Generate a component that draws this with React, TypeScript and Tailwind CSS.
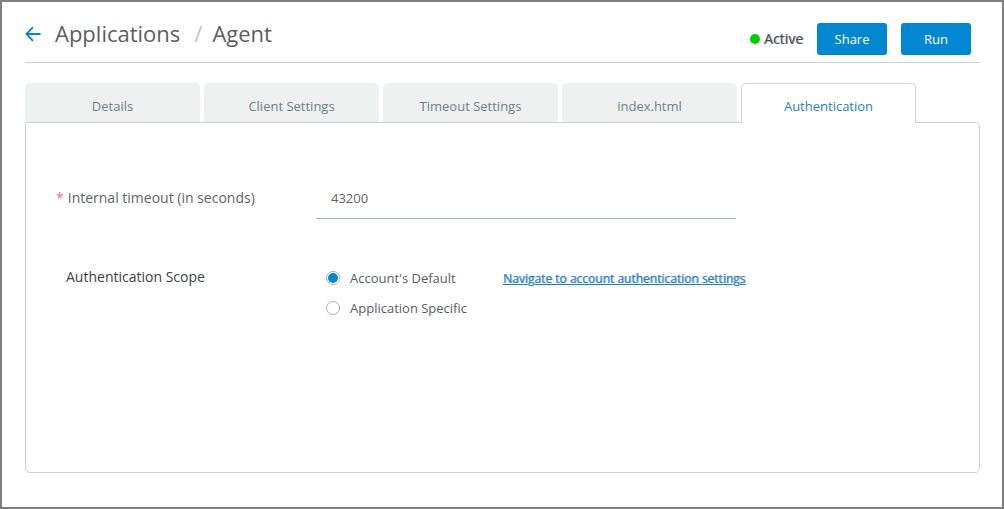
import { useState } from "react";

const tabs = [
  "Details",
  "Client Settings",
  "Timeout Settings",
  "index.html",
  "Authentication",
];

const scopes = ["Account's Default", "Application Specific"];

function Header() {
  return (
    <header className="flex h-[61px] items-center justify-between border-b border-[#cdd4d6]">
      <nav className="flex items-center pt-[2px] text-[22px] leading-8 text-[#5c5e62]">
        <a href="#back" aria-label="Back" className="mr-[14px] pt-px">
          <svg
            width="16"
            height="16"
            viewBox="0 0 16 16"
            fill="none"
            stroke="#0288d1"
            strokeWidth="1.8"
          >
            <path d="M15.5 8H1.5M8 1.2 1.4 8 8 14.8" />
          </svg>
        </a>
        <a href="#applications">Applications</a>
        <span className="mr-[10px] ml-[14px] text-[#c0c4ca]">/</span>
        <span>Agent</span>
      </nav>
      <div className="flex items-center pt-[14px] pr-[9px]">
        <span className="mr-1 h-[10px] w-[10px] rounded-full bg-[#00d000]" />
        <span className="mr-[14px] text-[14px] leading-5 text-[#454b55] [text-shadow:1px_0_0_#454b5580]">
          Active
        </span>
        <button className="mr-[14px] h-8 w-[70px] rounded-[3px] bg-[#0288d1] pt-[2px] text-[13px] text-white">
          Share
        </button>
        <button className="h-8 w-[70px] rounded-[3px] bg-[#0288d1] pt-[2px] text-[13px] text-white">
          Run
        </button>
      </div>
    </header>
  );
}

export default function App() {
  const [active, setActive] = useState("Authentication");
  const [scope, setScope] = useState(scopes[0]);
  const [timeout, setTimeoutValue] = useState("43200");

  return (
    <div className="flex min-h-screen flex-col border-2 border-[#7f7f7f] bg-white pr-[22px] pb-[34px] pl-[23px] font-['Open_Sans',sans-serif]">
      <Header />
      <div role="tablist" className="z-10 mt-5 -mb-px flex gap-1">
        {tabs.map((tab) => (
          <button
            key={tab}
            role="tab"
            aria-selected={active === tab}
            onClick={() => setActive(tab)}
            className={
              active === tab
                ? "h-10 w-[175px] rounded-t-[5px] border border-b-0 border-[#d3d6d9] bg-white pt-[6px] text-[13px] text-[#1f80c8]"
                : "h-10 w-[175px] rounded-t-[5px] border-b border-[#cdd4d6] bg-[#eff1f1] pt-2 text-[13px] text-[#6b808c]"
            }
          >
            {tab}
          </button>
        ))}
      </div>
      <main className="flex-1 rounded-[5px] rounded-tl-none border border-[#cdd2d5] pt-[54px] pl-[30px]">
        <div className="flex items-center">
          <label
            htmlFor="timeout"
            className="w-[260px] text-[14px] leading-5 text-[#5f6368]"
          >
            <span className="mr-1 text-[#f4716f]">*</span>
            Internal timeout (in seconds)
          </label>
          <input
            id="timeout"
            value={timeout}
            onChange={(e) => setTimeoutValue(e.target.value)}
            className="h-[42px] w-[420px] border-b border-[#a7b1b8] px-[15px] text-[13px] text-[#5f6368] outline-none"
          />
        </div>
        <fieldset className="mt-12 flex pl-[10px]">
          <legend className="float-left w-[260px] text-[14px] leading-5 text-[#3c3f45]">
            Authentication Scope
          </legend>
          <div className="flex flex-col gap-[10px] pt-px">
            {scopes.map((item) => (
              <label
                key={item}
                className="flex h-5 items-center gap-[10px] text-[13px] leading-5 text-[#5a5d62]"
              >
                <input
                  type="radio"
                  name="scope"
                  checked={scope === item}
                  onChange={() => setScope(item)}
                  className="h-[14px] w-[14px] appearance-none rounded-full border border-[#a9afb4] bg-white bg-clip-content p-px checked:bg-[#0288d1]"
                />
                {item}
              </label>
            ))}
          </div>
          <a
            href="#settings"
            className="ml-9 pt-[2px] text-[12px] leading-5 text-[#1f80c8] underline [text-shadow:1px_0_0_#1f80c8a0]"
          >
            Navigate to account authentication settings
          </a>
        </fieldset>
      </main>
    </div>
  );
}
